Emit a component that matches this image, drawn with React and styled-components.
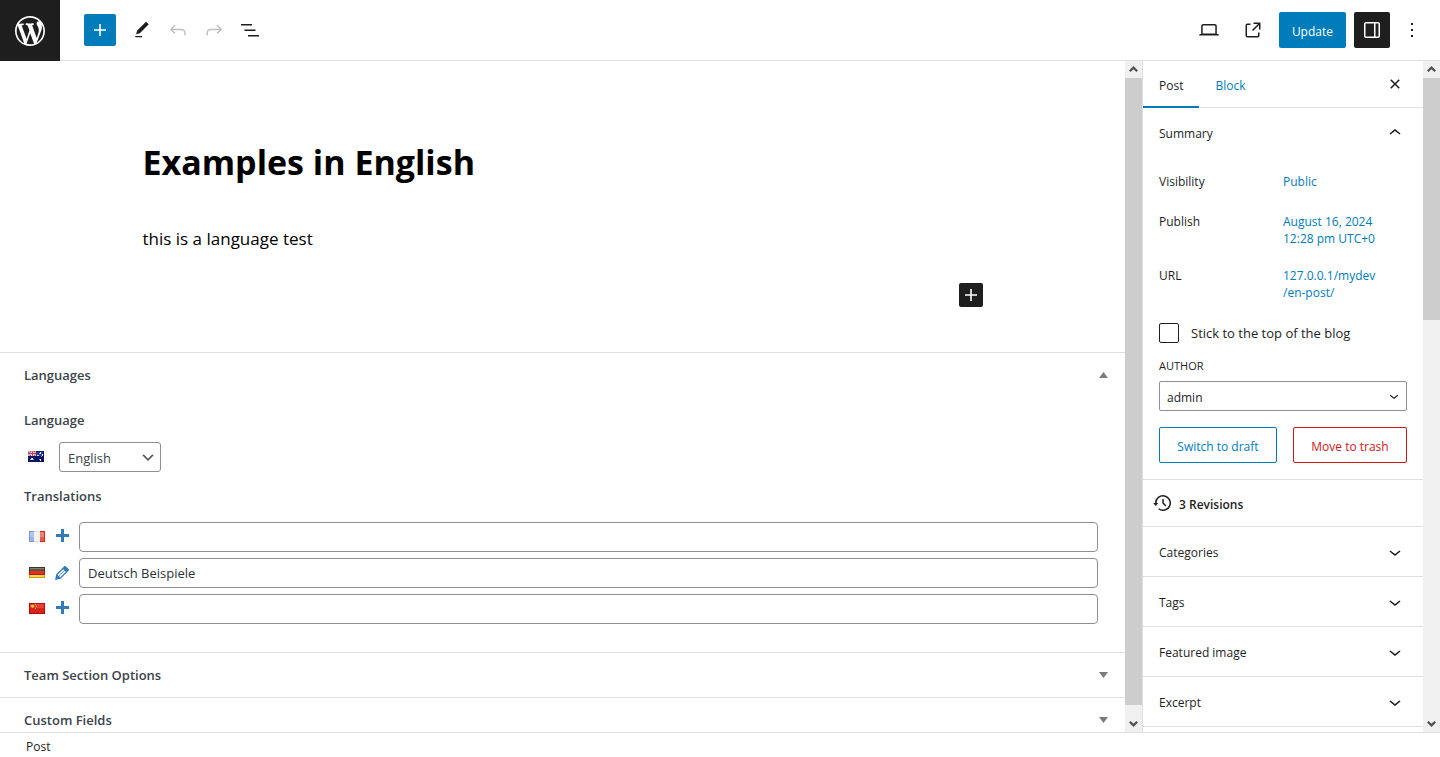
import { useState } from "react";
import styled, { createGlobalStyle } from "styled-components";

const GlobalStyle = createGlobalStyle`
    * {
        box-sizing: border-box;
    }
    body {
        margin: 0;
        background-color: #fff;
        color: #1e1e1e;
        font-family: "Segoe UI", "Open Sans", "Noto Sans", sans-serif;
        font-size: 12px;
        line-height: 17px;
    }
    button, input, select {
        font-family: inherit;
        font-size: inherit;
        color: inherit;
    }
    h1, h2, p {
        margin: 0;
    }
    svg {
        display: block;
    }
`

const Page = styled.div`
    display: flex;
    flex-direction: column;
    height: 100vh;
    overflow: hidden;
`

const Header = styled.header`
    display: flex;
    flex: none;
    justify-content: space-between;
    height: 61px;
    border-bottom: 1px solid #e0e0e0;
`
const HomeLink = styled.a`
    display: flex;
    align-items: center;
    justify-content: center;
    width: 60px;
    height: 61px;
    margin-right: 14px;
    padding-top: 1px;
    background-color: #1e1e1e;
    color: #fff;
`
const Tools = styled.div`
    display: flex;
    align-items: center;
    gap: 10px;
`
const ToolGroup = styled.div`
    display: flex;
    align-items: center;
    gap: 4px;
`
const Actions = styled.div`
    display: flex;
    align-items: center;
    gap: 8px;
    padding-right: 14px;
`
const IconButton = styled.button`
    display: flex;
    align-items: center;
    justify-content: center;
    flex: none;
    width: ${(props) => props.$size || '32px'};
    height: ${(props) => props.$size || '32px'};
    padding: 0;
    border: none;
    border-radius: 2px;
    background-color: ${(props) => props.$bg || 'transparent'};
    color: ${(props) => props.$color || '#1e1e1e'};
    cursor: pointer;
    &:disabled {
        color: #c0c0c0;
        cursor: default;
    }
`
const UpdateButton = styled.button`
    height: 36px;
    padding: 2px 13px 0;
    border: none;
    border-radius: 2px;
    background-color: #007cba;
    color: #fff;
    cursor: pointer;
`

const Body = styled.div`
    display: flex;
    flex: 1;
    min-height: 0;
`
const Editor = styled.main`
    flex: 1;
    min-width: 0;
    overflow: hidden;
`
const Canvas = styled.section`
    height: 291px;
    padding: 76px 24px 0;
    color: #000;
`
const CanvasInner = styled.div`
    display: flex;
    flex-direction: column;
    max-width: 840px;
    margin: 0 auto;
`
const PostTitle = styled.h1`
    font-size: 34px;
    line-height: 50px;
    font-weight: 700;
`
const Paragraph = styled.p`
    margin-top: 38px;
    font-size: 17px;
    line-height: 28px;
`
const Appender = styled.div`
    display: flex;
    justify-content: flex-end;
    margin-top: 30px;
`

const MetaBox = styled.section`
    border-top: 1px solid #e0e0e0;
    color: #3c434a;
`
const MetaHead = styled.button`
    display: flex;
    align-items: center;
    justify-content: space-between;
    width: 100%;
    height: 44px;
    padding: 0 17px 0 24px;
    border: none;
    background-color: transparent;
    font-size: 13px;
    font-weight: 600;
    cursor: pointer;
`
const MetaContent = styled.div`
    padding: 13px 27px 28px 24px;
    font-size: 13px;
`
const MetaLabel = styled.label`
    display: block;
    font-weight: 600;
    line-height: 20px;
`
const LanguageRow = styled.div`
    display: flex;
    align-items: center;
    gap: 15px;
    margin: 12px 0 14px;
    padding-left: 4px;
`
const SelectWrap = styled.div`
    display: grid;
    align-items: center;
    width: ${(props) => props.$width || '100%'};
    > * {
        grid-area: 1 / 1;
    }
    > svg {
        justify-self: end;
        margin-right: 4px;
        pointer-events: none;
    }
`
const Select = styled.select`
    width: 100%;
    height: 30px;
    padding: 2px 24px 0 ${(props) => props.$left || '8px'};
    appearance: none;
    border: 1px solid #8c8f94;
    border-radius: ${(props) => props.$radius || '3px'};
    background-color: #fff;
`
const TranslationList = styled.div`
    display: flex;
    flex-direction: column;
    gap: 6px;
    margin-top: 16px;
`
const TranslationRow = styled.div`
    display: flex;
    align-items: center;
    gap: 7px;
    padding-left: 5px;
`
const TranslationLink = styled.a`
    color: #337ab7;
`
const TranslationInput = styled.input`
    flex: 1;
    min-width: 0;
    height: 30px;
    padding: 0 8px;
    border: 1px solid #8c8f94;
    border-radius: 4px;
    color: #2c3338;
`

const Sidebar = styled.aside`
    flex: none;
    width: 281px;
    overflow: hidden;
    border-left: 1px solid #e0e0e0;
`
const Tabs = styled.div`
    display: flex;
    align-items: center;
    height: 47px;
    padding-right: 16px;
    border-bottom: 1px solid #e0e0e0;
    > :last-child {
        margin-left: auto;
    }
`
const Tab = styled.button`
    height: 47px;
    padding: 4px 16px 0;
    border: none;
    border-bottom: 2px solid ${(props) => props.$active ? '#007cba' : 'transparent'};
    background-color: transparent;
    color: ${(props) => props.$active ? '#1e1e1e' : '#007cba'};
    cursor: pointer;
`
const PanelHead = styled.button`
    display: flex;
    align-items: center;
    justify-content: space-between;
    width: 100%;
    height: 49px;
    padding: 0 16px;
    border: none;
    background-color: transparent;
    cursor: pointer;
`
const PanelTitle = styled.span`
    padding-top: 2px;
`
const Panel = styled.section`
    border-bottom: 1px solid #e0e0e0;
`
const PanelBody = styled.div`
    padding: 8px 16px 16px;
`
const Field = styled.div`
    display: flex;
    align-items: baseline;
    padding: 8px 0;
    min-height: 36px;
    margin-bottom: ${(props) => props.$gap || '4px'};
`
const FieldName = styled.span`
    flex: 1;
`
const FieldLink = styled.a`
    flex: 1;
    color: #007cba;
    text-decoration: none;
    white-space: pre-line;
`
const StickyLabel = styled.label`
    display: flex;
    align-items: center;
    gap: 12px;
    font-size: 13px;
`
const CheckBox = styled.input`
    width: 20px;
    height: 20px;
    margin: 0;
    appearance: none;
    border: 1px solid #1e1e1e;
    border-radius: 2px;
`
const AuthorLabel = styled.label`
    display: block;
    margin: 14px 0 7px;
    font-size: 11px;
    line-height: 17px;
    text-transform: uppercase;
`
const ButtonRow = styled.div`
    display: flex;
    justify-content: space-between;
    gap: 16px;
    margin-top: 16px;
`
const OutlineButton = styled.button`
    flex: auto;
    height: 36px;
    padding: 2px 4px 0;
    border: 1px solid ${(props) => props.$color};
    border-radius: 2px;
    background-color: transparent;
    color: ${(props) => props.$color};
    white-space: nowrap;
    cursor: pointer;
`
const Revisions = styled.a`
    display: flex;
    align-items: center;
    gap: 4px;
    height: 47px;
    padding: 0 8px;
    border-bottom: 1px solid #e0e0e0;
    color: #1e1e1e;
    font-weight: 600;
    text-decoration: none;
`

const ScrollTrack = styled.div`
    display: flex;
    flex: none;
    flex-direction: column;
    width: 17px;
    background-color: #f0f0f0;
    color: #505050;
`
const ScrollArrow = styled.div`
    display: flex;
    flex: none;
    align-items: center;
    justify-content: center;
    height: 17px;
`
const ScrollSpace = styled.div`
    flex: 1;
`
const ScrollThumb = styled.div`
    height: ${(props) => props.$length};
    background-color: #cdcdcd;
`

const Footer = styled.footer`
    flex: none;
    height: 25px;
    padding: 5px 26px 0;
    border-top: 1px solid #e0e0e0;
`

const PATHS = {
    plus: 'M18 11.2h-5.2V6h-1.6v5.2H6v1.6h5.2V18h1.6v-5.2H18z',
    edit: 'M20.1 5.1L16.9 2 6.2 12.7l-1.3 4.4 4.5-1.3L20.1 5.1zM4 20.8h8v-1.5H4v1.5z',
    undo: 'M18.3 11.7c-.6-.6-1.4-.9-2.3-.9H6.7l2.9-3.3-1.1-1-4.5 5L8.5 16l1-1-2.7-2.7H16c.5 0 .9.2 1.3.5 1 1 1 3.4 1 4.5v.3h1.5v-.2c0-1.5 0-4.3-1.5-5.7z',
    redo: 'M15.6 6.5l-1.1 1 2.9 3.3H8c-.9 0-1.7.3-2.3.9-1.4 1.5-1.4 4.2-1.4 5.6v.2h1.5v-.3c0-1.1 0-3.5 1-4.5.3-.3.7-.5 1.3-.5h9.2L14.5 15l1.1 1.1 4.6-4.6-4.6-5z',
    listView: 'M3 6h11v1.5H3V6Zm3.5 5.5h11V13h-11v-1.5ZM21 17H10v1.5h11V17Z',
    desktop: 'M20.5 16h-.7V8c0-1.1-.9-2-2-2H6.2c-1.1 0-2 .9-2 2v8h-.7c-.8 0-1.5.7-1.5 1.5h20c0-.8-.7-1.5-1.5-1.5zM5.7 8c0-.3.2-.5.5-.5h11.6c.3 0 .5.2.5.5v7.6H5.7V8z',
    external: 'M19.5 4.5h-7V6h4.44l-5.97 5.97 1.06 1.06L18 7.06v4.44h1.5v-7Zm-13 1a2 2 0 0 0-2 2v10a2 2 0 0 0 2 2h10a2 2 0 0 0 2-2v-3H17v3a.5.5 0 0 1-.5.5h-10a.5.5 0 0 1-.5-.5v-10a.5.5 0 0 1 .5-.5h3V5.5h-3Z',
    drawer: 'M18 4H6c-1.1 0-2 .9-2 2v12c0 1.1.9 2 2 2h12c1.1 0 2-.9 2-2V6c0-1.1-.9-2-2-2zm-4 14.5H6c-.3 0-.5-.2-.5-.5V6c0-.3.2-.5.5-.5h8v13zm4.5-.5c0 .3-.2.5-.5.5h-2.5v-13H18c.3 0 .5.2.5.5v12z',
    more: 'M13 19h-2v-2h2v2zm0-6h-2v-2h2v2zm0-6h-2V5h2v2z',
    close: 'M12 13.06l3.712 3.713 1.061-1.06L13.061 12l3.712-3.712-1.06-1.06L12 10.938 8.288 7.227l-1.061 1.06L10.939 12l-3.712 3.712 1.06 1.061L12 13.061z',
    up: 'M6.5 12.4L12 8l5.5 4.4-.9 1.2L12 10l-4.5 3.6-1-1.2z',
    down: 'M17.5 11.6L12 16l-5.5-4.4.9-1.2L12 14l4.5-3.6 1 1.2z',
    backup: 'M5.5 12h1.75l-2.5 3-2.5-3H4a8 8 0 113.134 6.35l.907-1.194A6.5 6.5 0 105.5 12zm9.53 1.97l-2.28-2.28V8.5a.75.75 0 00-1.5 0V12a.747.747 0 00.218.529l1.282-.84-1.28.842 2.5 2.5a.75.75 0 101.06-1.061z',
}

const Icon = ({ name, size = 24 }) => (
    <svg width={size} height={size} viewBox="0 0 24 24" fill="currentColor" aria-hidden="true">
        <path d={PATHS[name]} />
    </svg>
);

const WordPressLogo = () => (
    <svg width="36" height="36" viewBox="-2 -2 24 24" fill="currentColor" aria-hidden="true">
        <path d="M20 10c0-5.51-4.49-10-10-10C4.48 0 0 4.49 0 10c0 5.52 4.48 10 10 10 5.51 0 10-4.48 10-10zM7.78 15.37L4.37 6.22c.55-.02 1.17-.08 1.17-.08.5-.06.44-1.13-.06-1.11 0 0-1.45.11-2.37.11-.18 0-.37 0-.58-.01C4.12 2.69 6.87 1.11 10 1.11c2.33 0 4.45.87 6.05 2.34-.68-.11-1.65.39-1.65 1.58 0 .74.45 1.36.9 2.1.35.61.55 1.36.55 2.46 0 1.49-1.4 5-1.4 5l-3.03-8.37c.54-.02.82-.17.82-.17.5-.05.44-1.25-.06-1.22 0 0-1.44.12-2.38.12-.87 0-2.33-.12-2.33-.12-.5-.03-.56 1.2-.06 1.22l.92.08 1.26 3.41zM17.41 10c.24-.64.74-1.87.43-4.25.7 1.29 1.05 2.71 1.05 4.25 0 3.29-1.73 6.24-4.4 7.78.97-2.59 1.94-5.2 2.92-7.78zM6.1 18.09C3.12 16.65 1.11 13.53 1.11 10c0-1.3.23-2.48.72-3.59C3.25 10.3 4.67 14.2 6.1 18.09zm4.03-6.63l2.58 6.98c-.86.29-1.76.45-2.71.45-.79 0-1.57-.11-2.29-.33.81-2.38 1.62-4.74 2.42-7.1z" />
    </svg>
);

const Triangle = ({ up }) => (
    <svg width="9" height="6" viewBox="0 0 9 6" fill="#787c82" aria-hidden="true">
        <path d={up ? 'M0 6h9L4.5 0z' : 'M0 0h9L4.5 6z'} />
    </svg>
);

const Flag = ({ code }) => (
    <svg width="16" height="12" viewBox="0 0 16 12" shapeRendering="crispEdges" role="img" aria-label={code}>
        {code === 'au' && (
            <>
                <path fill="#0b1560" d="M0 0h16v11H0z" />
                <path fill="#2a3f96" d="M1 1h14v4H1z" />
                <path fill="#e8a0b0" d="M0 0h8v5H0z" />
                <path fill="#5468b4" d="M2 0h1v1H2zM6 0h1v1H6zM0 1h1v1H0zM2 4h1v1H2zM6 4h1v1H6z" />
                <path fill="#f6e6ec" d="M3 1h3v4H3zM1 2h7v1H1z" />
                <path fill="#e0324a" d="M4 0h1v5H4zM0 2h8v1H0z" />
                <path fill="#dfe4fa" d="M3 7h2v2H3zM12 1h1v2h-1zM9 4h2v1H9zM14 3h1v2h-1zM12 8h1v2h-1z" />
                <path fill="#8796cf" d="M2 8h1v1H2zM5 8h1v1H5zM11 2h1v1h-1zM13 5h1v1h-1zM11 8h1v1h-1z" />
            </>
        )}
        {code === 'fr' && (
            <>
                <path fill="#d9d9de" d="M0 0h16v11H0z" />
                <path fill="#f3f3f5" d="M5 1h6v9H5z" />
                <path fill="#7d97d6" d="M0 0h5v11H0z" />
                <path fill="#b4c5ee" d="M1 1h4v5H1z" />
                <path fill="#9db3e6" d="M1 6h4v4H1z" />
                <path fill="#cf2a1c" d="M11 0h5v11h-5z" />
                <path fill="#ef8172" d="M11 1h4v5h-4z" />
                <path fill="#e85a48" d="M11 6h4v4h-4z" />
            </>
        )}
        {code === 'de' && (
            <>
                <path fill="#3c3626" d="M0 0h16v4H0z" />
                <path fill="#857f6c" d="M1 1h14v1H1z" />
                <path fill="#5a5442" d="M1 2h14v2H1z" />
                <path fill="#b81408" d="M0 4h16v4H0z" />
                <path fill="#e03020" d="M1 4h14v3H1z" />
                <path fill="#d0a010" d="M0 8h16v3H0z" />
                <path fill="#f6d850" d="M1 8h14v2H1z" />
            </>
        )}
        {code === 'cn' && (
            <>
                <path fill="#b80c04" d="M0 0h16v11H0z" />
                <path fill="#e44034" d="M1 1h14v4H1z" />
                <path fill="#d42418" d="M1 5h14v5H1z" />
                <path fill="#f8c838" d="M2 2h3v2H2zM3 4h1v1H3zM6 1h1v1H6zM7 3h1v1H7zM6 5h1v1H6z" />
            </>
        )}
    </svg>
);

const AddIcon = () => (
    <svg width="20" height="20" viewBox="0 0 20 20" fill="currentColor" aria-hidden="true">
        <path d="M17 7v3h-5v5H9v-5H4V7h5V2h3v5h5z" />
    </svg>
);

const PencilIcon = () => (
    <svg width="20" height="20" viewBox="0 0 20 20" fill="currentColor" aria-hidden="true">
        <path d="M13.89 3.39l2.71 2.72c.46.46.42 1.24.03 1.64l-8.01 8.02-5.56 1.16 1.16-5.58s7.6-7.63 7.99-8.03c.39-.39 1.22-.39 1.68.07zm-2.73 2.79l-5.59 5.61 1.11 1.11 5.54-5.65zm-2.97 8.23l5.58-5.6-1.07-1.08-5.59 5.6z" />
    </svg>
);

const GreyChevron = () => (
    <svg width="18" height="18" viewBox="0 0 22 22" fill="#50575e" aria-hidden="true">
        <path d="M6 8l5 5 5-5 2 1-7 7-7-7 2-1z" />
    </svg>
);

const ScrollBar = ({ length }) => (
    <ScrollTrack aria-hidden="true">
        <ScrollArrow>
            <svg width="9" height="7" viewBox="0 0 9 7" fill="none" stroke="currentColor" strokeWidth="2.200">
                <path d="M.8 5.300L4.500 1.600 8.200 5.300" />
            </svg>
        </ScrollArrow>
        <ScrollSpace>
            <ScrollThumb $length={length} />
        </ScrollSpace>
        <ScrollArrow>
            <svg width="9" height="7" viewBox="0 0 9 7" fill="none" stroke="currentColor" strokeWidth="2.200">
                <path d="M.8 1.700L4.500 5.400 8.200 1.700" />
            </svg>
        </ScrollArrow>
    </ScrollTrack>
);

const translations = [
    { code: 'fr', name: 'Français', title: '' },
    { code: 'de', name: 'Deutsch', title: 'Deutsch Beispiele' },
    { code: 'cn', name: '中文', title: '' },
];

const panels = ['Categories', 'Tags', 'Featured image', 'Excerpt'];

const App = () => {
    const [tab, setTab] = useState('Post');
    const [languagesOpen, setLanguagesOpen] = useState(true);
    const [summaryOpen, setSummaryOpen] = useState(true);

    return (
        <Page>
            <GlobalStyle />
            <Header>
                <Tools>
                    <HomeLink href="#" aria-label="View Posts"><WordPressLogo /></HomeLink>
                    <IconButton $bg="#007cba" $color="#fff" aria-label="Toggle block inserter"><Icon name="plus" /></IconButton>
                    <ToolGroup>
                        <IconButton aria-label="Tools"><Icon name="edit" size={20} /></IconButton>
                        <IconButton aria-label="Undo" disabled><Icon name="undo" /></IconButton>
                        <IconButton aria-label="Redo" disabled><Icon name="redo" /></IconButton>
                        <IconButton aria-label="Document Overview"><Icon name="listView" /></IconButton>
                    </ToolGroup>
                </Tools>
                <Actions>
                    <IconButton $size="36px" aria-label="Preview"><Icon name="desktop" /></IconButton>
                    <IconButton $size="36px" aria-label="View Post"><Icon name="external" /></IconButton>
                    <UpdateButton>Update</UpdateButton>
                    <IconButton $size="36px" $bg="#1e1e1e" $color="#fff" aria-label="Settings"><Icon name="drawer" /></IconButton>
                    <IconButton $size="28px" aria-label="Options"><Icon name="more" /></IconButton>
                </Actions>
            </Header>
            <Body>
                <Editor>
                    <Canvas>
                        <CanvasInner>
                            <PostTitle>Examples in English</PostTitle>
                            <Paragraph>this is a language test</Paragraph>
                            <Appender>
                                <IconButton $size="24px" $bg="#1e1e1e" $color="#fff" aria-label="Add block"><Icon name="plus" /></IconButton>
                            </Appender>
                        </CanvasInner>
                    </Canvas>
                    <MetaBox>
                        <MetaHead aria-expanded={languagesOpen} onClick={() => setLanguagesOpen(!languagesOpen)}>
                            Languages
                            <Triangle up={languagesOpen} />
                        </MetaHead>
                        {languagesOpen && (
                            <MetaContent>
                                <MetaLabel htmlFor="language">Language</MetaLabel>
                                <LanguageRow>
                                    <Flag code="au" />
                                    <SelectWrap $width="102px">
                                        <Select id="language" defaultValue="English">
                                            <option>English</option>
                                            <option>Deutsch</option>
                                        </Select>
                                        <GreyChevron />
                                    </SelectWrap>
                                </LanguageRow>
                                <MetaLabel as="p">Translations</MetaLabel>
                                <TranslationList>
                                    {translations.map((item) => (
                                        <TranslationRow key={item.code}>
                                            <Flag code={item.code} />
                                            <TranslationLink href="#" aria-label={item.name}>
                                                {item.title ? <PencilIcon /> : <AddIcon />}
                                            </TranslationLink>
                                            <TranslationInput type="text" aria-label={item.name} defaultValue={item.title} />
                                        </TranslationRow>
                                    ))}
                                </TranslationList>
                            </MetaContent>
                        )}
                    </MetaBox>
                    <MetaBox>
                        <MetaHead>Team Section Options<Triangle /></MetaHead>
                    </MetaBox>
                    <MetaBox>
                        <MetaHead>Custom Fields<Triangle /></MetaHead>
                    </MetaBox>
                </Editor>
                <ScrollBar length="98.5%" />
                <Sidebar>
                    <Tabs>
                        {['Post', 'Block'].map((name) => (
                            <Tab key={name} $active={tab === name} onClick={() => setTab(name)}>{name}</Tab>
                        ))}
                        <IconButton $size="24px" aria-label="Close Settings"><Icon name="close" /></IconButton>
                    </Tabs>
                    <Panel>
                        <PanelHead aria-expanded={summaryOpen} onClick={() => setSummaryOpen(!summaryOpen)}>
                            <PanelTitle>Summary</PanelTitle>
                            <Icon name={summaryOpen ? 'up' : 'down'} />
                        </PanelHead>
                        {summaryOpen && (
                            <PanelBody>
                                <Field>
                                    <FieldName>Visibility</FieldName>
                                    <FieldLink href="#">Public</FieldLink>
                                </Field>
                                <Field>
                                    <FieldName>Publish</FieldName>
                                    <FieldLink href="#">{'August 16, 2024\n12:28 pm UTC+0'}</FieldLink>
                                </Field>
                                <Field $gap="14px">
                                    <FieldName>URL</FieldName>
                                    <FieldLink href="#">{'127.0.0.1/mydev\n/en-post/'}</FieldLink>
                                </Field>
                                <StickyLabel>
                                    <CheckBox type="checkbox" />
                                    Stick to the top of the blog
                                </StickyLabel>
                                <AuthorLabel htmlFor="author">Author</AuthorLabel>
                                <SelectWrap>
                                    <Select id="author" defaultValue="admin" $left="7px" $radius="2px">
                                        <option>admin</option>
                                    </Select>
                                    <Icon name="down" size={18} />
                                </SelectWrap>
                                <ButtonRow>
                                    <OutlineButton $color="#007cba">Switch to draft</OutlineButton>
                                    <OutlineButton $color="#cc1818">Move to trash</OutlineButton>
                                </ButtonRow>
                            </PanelBody>
                        )}
                    </Panel>
                    <Revisions href="#">
                        <Icon name="backup" />
                        <PanelTitle>3 Revisions</PanelTitle>
                    </Revisions>
                    {panels.map((name) => (
                        <Panel key={name}>
                            <PanelHead><PanelTitle>{name}</PanelTitle><Icon name="down" /></PanelHead>
                        </Panel>
                    ))}
                </Sidebar>
                <ScrollBar length="38%" />
            </Body>
            <Footer>Post</Footer>
        </Page>
    );
};

export default App;
